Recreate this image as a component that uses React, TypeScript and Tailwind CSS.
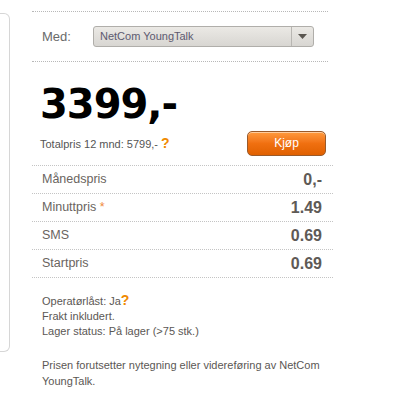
import React from "react";

const rows = [
  { label: "Månedspris", value: "0,-", star: false },
  { label: "Minuttpris", value: "1.49", star: true },
  { label: "SMS", value: "0.69", star: false },
  { label: "Startpris", value: "0.69", star: false },
];

export default function App() {
  return (
    <div className="w-[400px] h-[400px] bg-white flex font-['Liberation_Sans',Arial,sans-serif] text-[#5b5754] overflow-hidden">
      {/* left panel edge */}
      <div className="mt-[13px] w-[10px] h-[339px] border-t border-r border-b border-[#d6d6d6] rounded-r-[6px] shrink-0" />

      <div className="ml-[22px] w-[301px] flex flex-col">
        <div className="mt-[11px] w-[296px] border-t border-dotted border-[#b8b8b8]" />

        {/* Med select */}
        <div className="w-[296px] h-[50px] flex items-center border-b border-dotted border-[#b8b8b8]">
          <span className="ml-[10px] w-[51px] text-[13px] text-[#6a6a6a]">Med:</span>
          <div className="h-[21px] w-[221px] flex border border-[#b0aeaa] rounded-[3px] bg-gradient-to-b from-[#ebe9e5] to-[#d8d6d2]">
            <span className="flex-1 pl-[6px] text-[11px] leading-[18px] text-[#5d5a70]">NetCom YoungTalk</span>
            <div className="w-[22px] border-l border-[#b8b6b2] flex items-center justify-center">
              <svg width="9" height="5" viewBox="0 0 9 5">
                <path d="M0 0h9L4.5 5z" fill="#5a5650" />
              </svg>
            </div>
          </div>
        </div>

        {/* price */}
        <div className="pl-[8px] mt-[18px] font-['DejaVu_Sans',Verdana,sans-serif] font-bold text-[40px] leading-[48px] tracking-[-1px] text-black">
          3399,-
        </div>

        <div className="flex items-center mt-[1px] h-[28px]">
          <span className="ml-[8px] text-[11px] text-[#555]">
            Totalpris 12 mnd: 5799,-{" "}
            <span className="text-[#f08a00] font-bold text-[14px]">?</span>
          </span>
          <button className="ml-auto mr-[7px] w-[79px] h-[25px] rounded-[5px] border border-[#9a5a2a] bg-gradient-to-b from-[#ff9a3c] via-[#f07010] to-[#e06000] text-white text-[12px] shadow-[inset_0_1px_0_rgba(255,255,255,0.5)]">
            Kjøp
          </button>
        </div>

        {/* table */}
        <div className="mt-[8px] border-t border-dotted border-[#c4c4c4]">
          {rows.map((r) => (
            <div
              key={r.label}
              className="h-[28px] flex items-center justify-between border-b border-dotted border-[#c4c4c4] pl-[10px] pr-[11px]"
            >
              <span className="text-[12.5px] text-[#6a6460]">
                {r.label}
                {r.star && <span className="text-[#f08a3c]"> *</span>}
              </span>
              <span className="text-[16px] font-bold text-[#5e5a56]">{r.value}</span>
            </div>
          ))}
        </div>

        <div className="mt-[16px] pl-[10px] text-[11px] leading-[15px] text-[#5b5754]">
          <div>
            Operatørlåst: Ja<span className="text-[#f08a00] font-bold text-[14px] leading-[13px]">?</span>
          </div>
          <div>Frakt inkludert.</div>
          <div>Lager status: På lager (&gt;75 stk.)</div>
        </div>

        <div className="mt-[18px] pl-[10px] text-[11px] leading-[16px] text-[#5b5754] w-[290px]">
          Prisen forutsetter nytegning eller videreføring av NetCom YoungTalk.
        </div>
      </div>
    </div>
  );
}
